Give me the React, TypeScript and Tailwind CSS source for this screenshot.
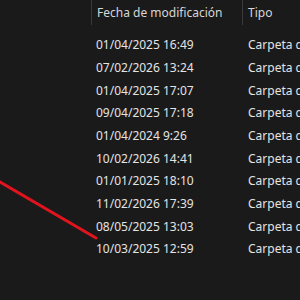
import React from "react";

const rows = [
  "01/04/2025 16:49",
  "07/02/2026 13:24",
  "01/04/2025 17:07",
  "09/04/2025 17:18",
  "01/04/2024 9:26",
  "10/02/2026 14:41",
  "01/01/2025 18:10",
  "11/02/2026 17:39",
  "08/05/2025 13:03",
  "10/03/2025 12:59",
];

export default function App() {
  return (
    <div
      className="relative w-[300px] h-[300px] overflow-hidden bg-[#1a1a1a] text-[12px] text-[#e4e4e4]"
      style={{ fontFamily: '"Noto Sans", "Open Sans", sans-serif' }}
    >
      <div className="flex h-[25px]">
        <div className="w-[91px] shrink-0" />
        <div className="w-[151px] shrink-0 border-l border-[#3a3a3a] pl-[5px] flex items-center text-[#d6d6d6] whitespace-nowrap overflow-hidden">
          Fecha de modificación
        </div>
        <div className="flex-1 border-l border-[#3a3a3a] pl-[5px] flex items-center text-[#d6d6d6] whitespace-nowrap">
          Tipo
        </div>
      </div>
      <div className="flex flex-col pt-[9px]">
        {rows.map((d) => (
          <div key={d} className="flex h-[22.67px] items-center whitespace-nowrap">
            <div className="w-[96px] shrink-0" />
            <div className="w-[152px] shrink-0">{d}</div>
            <div className="flex-1 overflow-hidden">Carpeta de archivos</div>
          </div>
        ))}
      </div>
      <svg className="absolute left-0 top-0" width="300" height="300">
        <line x1="-5" y1="179" x2="96" y2="238" stroke="#e0141e" strokeWidth="3" strokeLinecap="round" />
      </svg>
    </div>
  );
}
